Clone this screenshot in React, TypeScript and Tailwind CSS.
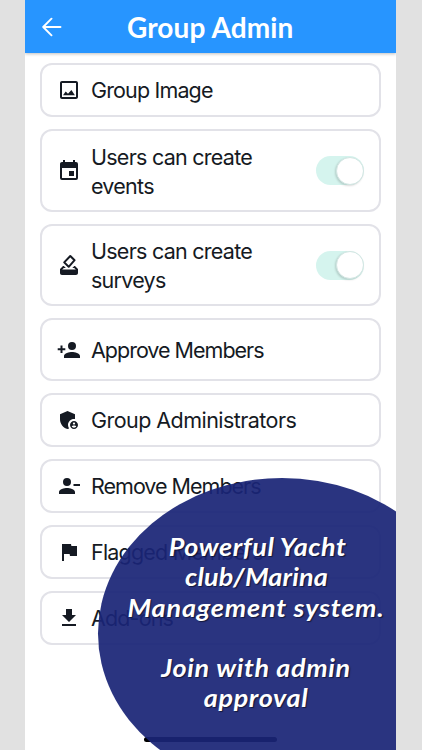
import type { ReactNode } from 'react'
import { MdAdminPanelSettings, MdFileDownload, MdFlag } from 'react-icons/md'

const ImageIcon = () => (
	<svg viewBox="0 0 24 24" className="size-full" fill="currentColor">
		<path d="M19 5v14H5V5h14m0-2H5c-1.100 0-2 .9-2 2v14c0 1.100.9 2 2 2h14c1.100 0 2-.9 2-2V5c0-1.100-.9-2-2-2z" />
		<path d="M6 17.200 8.700 13.500l2.300 2.200 3.400-3.700 3.500 5.200z" />
	</svg>
)

const CalendarIcon = () => (
	<svg viewBox="0 0 24 24" className="size-full" fill="currentColor">
		<path d="M19 19H5V9h14m-3-8v2H8V1H6v2H5c-1.110 0-2 .89-2 2v14a2 2 0 0 0 2 2h14a2 2 0 0 0 2-2V5a2 2 0 0 0-2-2h-1V1m-1 11h-5v5h5v-5z" />
	</svg>
)

const VoteIcon = () => (
	<svg viewBox="0 0 24 24" className="size-full" fill="currentColor">
		<path d="M18 13h-.68l-2 2h1.910L19 17H5l1.780-2h2.050l-2-2H6l-3 3v4c0 1.100.89 2 2 2h14c1.110 0 2-.89 2-2v-4l-3-3z" />
		<path d="M4 16.500h16V20H4z" />
		<path d="m13.300 3 4.300 4.200-5.900 6.600-4.500-4.400z" fill="none" stroke="currentColor" strokeWidth="2" strokeLinejoin="round" />
	</svg>
)

const AddPersonIcon = () => (
	<svg viewBox="0 0 24 24" className="size-full" fill="currentColor">
		<path d="M15 4a4 4 0 1 0 0 8 4 4 0 0 0 0-8zM15 14c-2.670 0-8 1.340-8 4v2h16v-2c0-2.660-5.330-4-8-4zM5.500 7.500h-2v2.800H.7v2h2.800V15h2v-2.700h2.800v-2H5.500z" />
	</svg>
)

const RemovePersonIcon = () => (
	<svg viewBox="0 0 24 24" className="size-full" fill="currentColor">
		<path d="M10 4a4 4 0 1 0 0 8 4 4 0 0 0 0-8zM10 14c-2.670 0-8 1.340-8 4v2h16v-2c0-2.660-5.330-4-8-4zM16.500 10H23v2h-6.500z" />
	</svg>
)

const Toggle = () => (
	<div className="flex h-[29px] w-12 shrink-0 items-center justify-end rounded-full bg-[#d5f4ee]">
		<div className="size-7 rounded-full border border-[#d3e6e3] bg-white shadow-[-1px_1px_2px_rgba(0,0,0,0.15)]" />
	</div>
)

type RowProps = {
	icon: ReactNode
	className: string
	textClass: string
	children: ReactNode
	toggle?: boolean
}

const Row = ({ icon, className, textClass, children, toggle }: RowProps) => (
	<div className={`flex shrink-0 items-center rounded-xl border-2 border-[#e2e2e8] bg-white px-[15px] ${className}`}>
		<div className="mr-[10px] size-6 shrink-0">{icon}</div>
		<div className={`grow whitespace-nowrap text-[21.500px] leading-[29px] ${textClass}`}>{children}</div>
		{toggle && <Toggle />}
	</div>
)

export default function App() {
	return (
		<div className="flex h-[750px] w-[422px] justify-center overflow-hidden bg-[#e1e1e1] pr-px font-['Inter',sans-serif] text-[#151a23]">
			<div className="relative flex h-full w-[371px] flex-col overflow-hidden bg-white">
				<header className="flex h-[53px] shrink-0 items-center bg-[#2795ff] text-white shadow-[0_1px_3px_rgba(0,0,0,0.25)]">
					<svg viewBox="0 0 20 20" className="ml-[17px] size-5" fill="none" stroke="currentColor" strokeWidth="1.900" strokeLinecap="round" strokeLinejoin="round">
						<path d="M18.500 10H1.500M9.500 1.700 1.200 10l8.300 8.300" />
					</svg>
					<h1 className="ml-[65px] whitespace-nowrap font-['Lato',sans-serif] text-[28px] font-bold leading-none tracking-[0.1px]">Group Admin</h1>
				</header>
				<main className="flex flex-col gap-3 px-[15px] pt-2.5">
					<Row icon={<ImageIcon />} className="h-[54px]" textClass="tracking-[-0.850px]">Group Image</Row>
					<Row icon={<CalendarIcon />} className="h-[83px]" textClass="pt-0.5 tracking-[-0.740px]" toggle>
						Users can create
						<br />
						events
					</Row>
					<Row icon={<VoteIcon />} className="h-[82px]" textClass="pt-px tracking-[-0.740px]" toggle>
						Users can create
						<br />
						surveys
					</Row>
					<Row icon={<AddPersonIcon />} className="h-[63px]" textClass="pt-px tracking-[-1px]">Approve Members</Row>
					<Row icon={<MdAdminPanelSettings className="size-full" />} className="h-[54px]" textClass="tracking-[-0.550px]">Group Administrators</Row>
					<Row icon={<RemovePersonIcon />} className="h-[54px]" textClass="tracking-[-1px]">Remove Members</Row>
					<Row icon={<MdFlag className="size-full" />} className="h-[54px]" textClass="tracking-[-0.8px]">Flagged Members</Row>
					<Row icon={<MdFileDownload className="size-full" />} className="h-[54px]" textClass="tracking-[-0.850px]">Add-ons</Row>
				</main>
				<div className="absolute bottom-2 left-[119px] h-[5px] w-[133px] rounded-full bg-black" />
				<div className="absolute left-[73px] top-[478px] h-[311px] w-[368px] rounded-[50%] bg-[#1a2576]/93" />
				<div className="absolute left-[93px] top-[531px] w-[276px] scale-x-108 text-center font-['Lato',sans-serif] text-[25px] font-bold italic leading-[30.300px] text-white [text-shadow:1px_1px_1px_rgba(0,0,0,0.55)]">
					<p className="whitespace-nowrap pl-[3px] tracking-[0.5px]">Powerful Yacht</p>
					<p className="whitespace-nowrap pl-px tracking-[0.150px]">club/Marina</p>
					<p className="whitespace-nowrap tracking-[0.750px]">Management system.</p>
					<p className="mt-[30px] whitespace-nowrap tracking-[0.6px]">Join with admin</p>
					<p className="whitespace-nowrap tracking-[0.6px]">approval</p>
				</div>
			</div>
		</div>
	)
}
